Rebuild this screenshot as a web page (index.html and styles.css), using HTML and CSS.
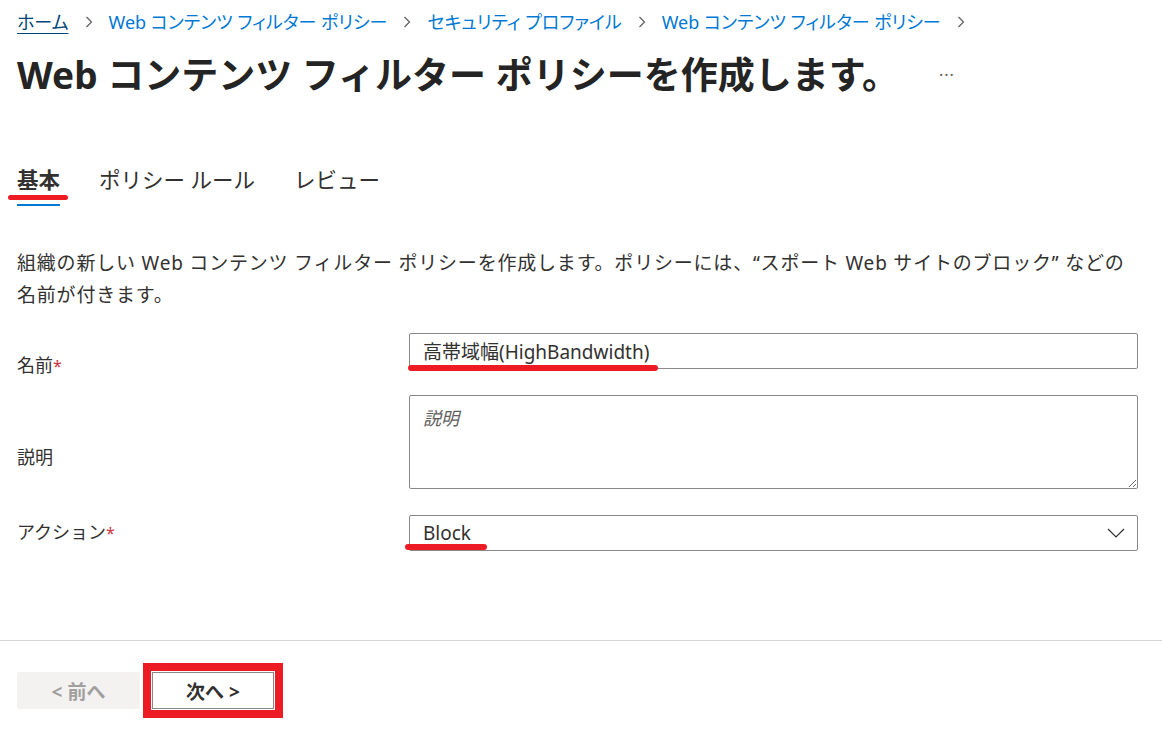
FILE: index.html
```html
<!DOCTYPE html>
<html lang="ja">
<head>
    <meta charset="UTF-8">
    <meta name="viewport" content="width=device-width, initial-scale=1.0">
    <title>Web コンテンツ フィルター ポリシーを作成します。</title>
    <link rel="stylesheet" href="styles.css">
</head>
<body>
    <div class="page">
        <nav class="breadcrumb">
            <a href="#" class="crumb crumb-home">ホーム</a>
            <svg class="chev" viewBox="0 0 8 12"><path d="M1.5 1 L6.5 6 L1.5 11"/></svg>
            <a href="#" class="crumb">Web コンテンツ フィルター ポリシー</a>
            <svg class="chev" viewBox="0 0 8 12"><path d="M1.5 1 L6.5 6 L1.5 11"/></svg>
            <a href="#" class="crumb">セキュリティ プロファイル</a>
            <svg class="chev" viewBox="0 0 8 12"><path d="M1.5 1 L6.5 6 L1.5 11"/></svg>
            <a href="#" class="crumb">Web コンテンツ フィルター ポリシー</a>
            <svg class="chev" viewBox="0 0 8 12"><path d="M1.5 1 L6.5 6 L1.5 11"/></svg>
        </nav>

        <div class="title-row">
            <h1>Web コンテンツ フィルター ポリシーを作成します。</h1>
            <span class="more">···</span>
        </div>

        <ul class="tabs">
            <li class="tab active">基本<span class="mark mark-tab"></span></li>
            <li class="tab">ポリシー ルール</li>
            <li class="tab">レビュー</li>
        </ul>

        <p class="intro">組織の新しい Web コンテンツ フィルター ポリシーを作成します。ポリシーには、“スポート Web サイトのブロック” などの名前が付きます。</p>

        <form class="form">
            <label class="label label-name">名前<span class="req">*</span></label>
            <div class="field">
                <input type="text" class="input" value="高帯域幅(HighBandwidth)">
                <span class="mark mark-name"></span>
            </div>

            <label class="label label-desc">説明</label>
            <div class="field">
                <textarea class="textarea" placeholder="説明"></textarea>
            </div>

            <label class="label label-action">アクション<span class="req">*</span></label>
            <div class="field">
                <div class="select">
                    <span>Block</span>
                    <svg class="caret" viewBox="0 0 18 10"><path d="M1 1 L9 9 L17 1"/></svg>
                </div>
                <span class="mark mark-block"></span>
            </div>
        </form>
    </div>

    <footer class="footer">
        <button class="btn btn-prev" disabled>&lt; 前へ</button>
        <button class="btn btn-next">次へ &gt;</button>
    </footer>
</body>
</html>
```

FILE: styles.css
```css
* {
    margin: 0;
    padding: 0;
    box-sizing: border-box;
}

body {
    font-family: "Noto Sans", "Noto Sans CJK JP", sans-serif;
    color: #323130;
    background-color: #fff;
    width: 1162px;
    height: 729px;
    overflow: hidden;
}

.page {
    padding: 0 17px;
}

/* Breadcrumb */
.breadcrumb {
    display: flex;
    align-items: center;
    gap: 16px;
    padding-top: 8px;
    height: 36px;
    font-size: 18px;
    font-feature-settings: "palt";
}

.crumb {
    color: #0078d4;
    text-decoration: none;
    line-height: 28px;
}

.crumb-home {
    color: #004578;
    text-decoration: underline;
    text-underline-offset: 4px;
}

.chev {
    width: 8px;
    height: 12px;
    fill: none;
    stroke: #605e5c;
    stroke-width: 1.2;
}

/* Title */
.title-row {
    display: flex;
    align-items: center;
    margin-top: 17px;
    height: 44px;
}

.title-row h1 {
    font-size: 37px;
    font-weight: 700;
    line-height: 44px;
    color: #242424;
}

.more {
    margin-left: 40px;
    font-size: 16px;
    color: #605e5c;
    letter-spacing: 1px;
}

/* Tabs */
.tabs {
    list-style: none;
    display: flex;
    gap: 39px;
    margin-top: 69px;
}

.tab {
    position: relative;
    font-size: 21.5px;
    line-height: 28px;
    padding-bottom: 10px;
    border-bottom: 2px solid transparent;
    color: #323130;
}

.tab.active {
    font-weight: 700;
    border-bottom-color: #0078d4;
}

/* Description */
.intro {
    margin-top: 41px;
    font-size: 19px;
    letter-spacing: 0.8px;
    line-height: 32px;
    max-width: 1115px;
}

/* Form */
.form {
    display: grid;
    grid-template-columns: 392px 729px;
    row-gap: 26px;
    margin-top: 22px;
}

.label {
    font-size: 18px;
    line-height: 28px;
}

.label-name {
    padding-top: 18px;
    height: 36px;
}

.label-desc {
    padding-top: 48px;
}

.label-action {
    padding-top: 3px;
}

.req {
    color: #d13438;
    font-size: 16px;
}

.field {
    position: relative;
}

.input,
.textarea,
.select {
    width: 100%;
    border: 1px solid #8a8886;
    border-radius: 2px;
    font-family: inherit;
    font-size: 19px;
    color: #323130;
    background: #fff;
}

.input {
    height: 36px;
    padding: 0 13px;
    outline: none;
}

.textarea {
    display: block;
    height: 94px;
    padding: 8px 13px;
    resize: both;
    font-size: 18px;
}

.textarea::placeholder {
    color: #605e5c;
    font-style: italic;
}

.select {
    height: 36px;
    display: flex;
    align-items: center;
    justify-content: space-between;
    padding: 0 12px 0 13px;
}

.caret {
    width: 18px;
    height: 10px;
    fill: none;
    stroke: #323130;
    stroke-width: 1.2;
}

/* Red annotation marks */
.mark {
    position: absolute;
    background: #ed1c24;
    border-radius: 3px;
    height: 6px;
}

.mark-tab {
    left: -9px;
    top: 29px;
    width: 60px;
    height: 5px;
}

.mark-name {
    left: -1px;
    top: 32px;
    width: 250px;
}

.mark-block {
    left: -4px;
    top: 29px;
    width: 82px;
}

/* Footer */
.footer {
    margin-top: 89px;
    border-top: 1px solid #d6d6d6;
    padding: 31px 17px 0;
    display: flex;
    gap: 12px;
}

.btn {
    height: 37px;
    width: 123px;
    font-family: inherit;
    font-size: 19px;
    font-weight: 700;
    border-radius: 2px;
}

.btn-prev {
    background: #f3f2f1;
    color: #a19f9d;
    border: none;
}

.btn-next {
    width: 122px;
    background: #fff;
    color: #323130;
    border: 1px solid #8a8886;
    border-radius: 0;
    outline: 8px solid #ed1c24;
    outline-offset: 1px;
}
```
